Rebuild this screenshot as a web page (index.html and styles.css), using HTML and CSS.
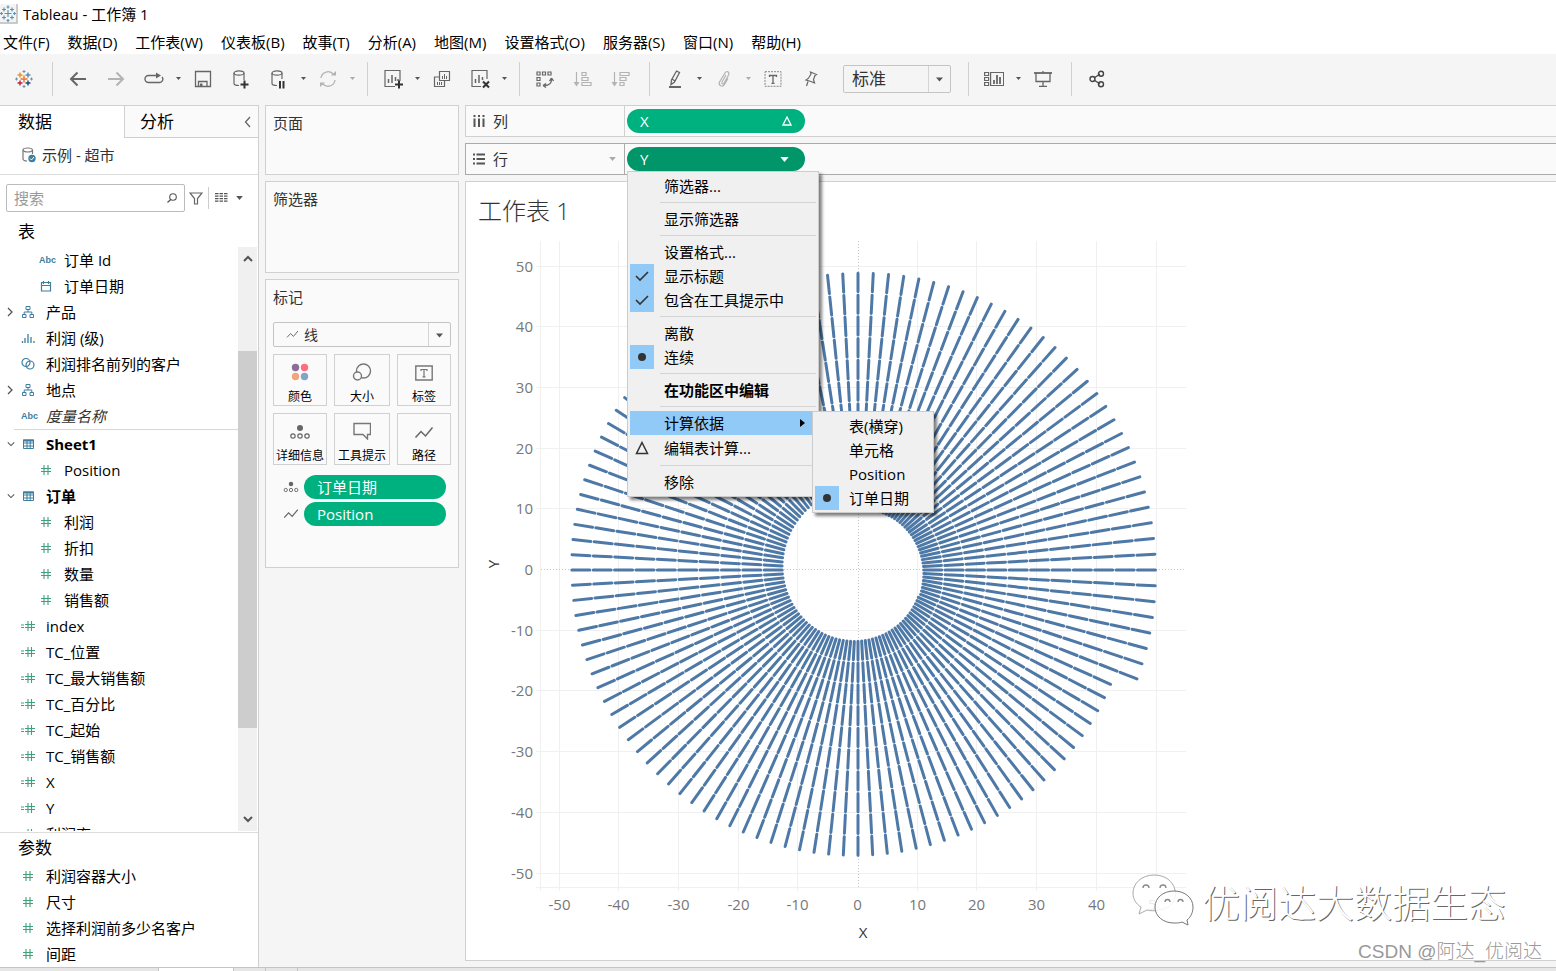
FILE: index.html
```html
<!DOCTYPE html>
<html lang="zh-CN">
<head>
<meta charset="utf-8">
<title>Tableau - 工作簿 1</title>
<link rel="stylesheet" href="styles.css">
</head>
<body>
<svg class="defs" aria-hidden="true">
  <symbol id="hash" viewBox="0 0 14 12"><path d="M5 1v10M9 1v10M2 4.500h10M2 7.500h10" fill="none" stroke="#3fa27a" stroke-width="1.100"/></symbol>
  <symbol id="calc" viewBox="0 0 14 12"><path d="M7 1v10M10.500 1v10M4 4.500h10M4 7.500h10M0 5h3M0 7.500h3" fill="none" stroke="#3fa27a" stroke-width="1.100"/></symbol>
  <symbol id="tbl" viewBox="0 0 14 12"><path d="M2.500 2h10v8.500h-10zM2.500 5h10M2.500 8h10M6 3v7.500M9.200 3v7.500" fill="none" stroke="#3c7f9f"/><path d="M2 1.500h11v2H2z" fill="#3c7f9f"/></symbol>
  <symbol id="tree" viewBox="0 0 14 12"><path d="M5 .5h4v3H5zM1.500 8.500h3.500v3H1.500zM9 8.500h3.500v3H9zM7 3.500V6M3.200 8.500V6h7.600v2.500" fill="none" stroke="#3c7f9f"/></symbol>
  <symbol id="caret" viewBox="0 0 10 6"><path d="M0 0h10L5 6z" fill="currentColor"/></symbol>
  <symbol id="detail" viewBox="0 0 20 16"><circle cx="10" cy="4" r="3" fill="#666"/><g fill="none" stroke="#666" stroke-width="1.200"><circle cx="3" cy="12" r="2.200"/><circle cx="10" cy="12" r="2.200"/><circle cx="17" cy="12" r="2.200"/></g></symbol>
  <symbol id="zig" viewBox="0 0 20 14"><path d="M1.500 11.500 7 5.500l4.500 4.500 7-8.500" fill="none" stroke="#666" stroke-width="1.500"/></symbol>
  <symbol id="right" viewBox="0 0 6 10"><path d="M1 1l4 4-4 4" fill="none" stroke="#555" stroke-width="1.300"/></symbol>
  <symbol id="down" viewBox="0 0 10 6"><path d="M1 1l4 4 4-4" fill="none" stroke="#555" stroke-width="1.300"/></symbol>
</svg>

<header class="titlebar">
  <svg class="app-icon" width="18" height="20" viewBox="0 0 18 20"><path d="M0 0h17v19H0z" fill="#f4f4f4"/><path d="M17 0v19H0" fill="none" stroke="#bbb" stroke-width="1.500"/><path d="M8 6v7M4.500 9.500h7M4 3.500v4M2 5.500h4M12 3.500v4M10 5.500h4M4 11.500v4M2 13.500h4M12 11.500v4M10 13.500h4M8 1.500v3M6.500 3h3M8 15v3M6.500 16.500h3M0 9.500h3M1.500 8v3M13 9.500h3M14.500 8v3" stroke="#5b93b4" stroke-width="1.200"/></svg>
  <h1>Tableau - 工作簿 1</h1>
</header>
<nav class="menubar">
  <a href="#">文件(F)</a><a href="#">数据(D)</a><a href="#">工作表(W)</a><a href="#">仪表板(B)</a><a href="#">故事(T)</a><a href="#">分析(A)</a><a href="#">地图(M)</a><a href="#">设置格式(O)</a><a href="#">服务器(S)</a><a href="#">窗口(N)</a><a href="#">帮助(H)</a>
</nav>

<div class="toolbar" role="toolbar" aria-label="工具栏">
  <button class="tb" aria-label="起始页"><svg width="18" height="18" viewBox="0 0 18 18"><g stroke-width="1.400"><path d="M9 5.500v7M5.500 9h7" stroke="#e8762c"/><path d="M5 2.500v5M2.500 5h5" stroke="#e8912c"/><path d="M13 2.500v5M10.500 5h5" stroke="#5c8fa8"/><path d="M5 10.500v5M2.500 13h5" stroke="#c9203c"/><path d="M13 10.500v5M10.500 13h5" stroke="#1f447e"/><path d="M9 0v3M7.500 1.500h3M9 15v3M7.500 16.500h3M0 9h3M1.500 7.500v3M15 9h3M16.500 7.500v3" stroke="#6a94a8" stroke-width="1"/></g></svg></button>
  <span class="sep"></span>
  <button class="tb" aria-label="撤消"><svg width="18" height="16" viewBox="0 0 18 16"><path d="M17 8H2M8.500 1.500 2 8l6.500 6.500" fill="none" stroke="#666" stroke-width="2"/></svg></button>
  <button class="tb" aria-label="重做"><svg width="18" height="16" viewBox="0 0 18 16"><path d="M1 8h15M9.500 1.500 16 8l-6.500 6.500" fill="none" stroke="#b3b3b3" stroke-width="2"/></svg></button>
  <button class="tb" aria-label="重播"><svg width="20" height="14" viewBox="0 0 20 14"><path d="M13 3.500H4.500a3.300 3.300 0 0 0 0 7h11a3.300 3.300 0 0 0 2.500-5.500" fill="none" stroke="#666" stroke-width="1.400"/><path d="M12 .5v6l5-3z" fill="#666"/></svg></button>
  <button class="cr" aria-label="更多"><svg width="5" height="3"><use href="#caret"/></svg></button>
  <button class="tb" aria-label="保存"><svg width="18" height="18" viewBox="0 0 18 18"><path d="M1.500 1.500h15v15h-15zM4.500 16.500v-5h8.500v5" fill="none" stroke="#666" stroke-width="1.300"/><path d="M6 13.500h2.500v3H6z" fill="#666"/></svg></button>
  <button class="tb" aria-label="新建数据源"><svg width="18" height="20" viewBox="0 0 18 20"><path d="M2 4v10.500c0 1 2 2 5 2M12 4v7" fill="none" stroke="#666" stroke-width="1.200"/><ellipse cx="7" cy="4" rx="5" ry="2.200" fill="none" stroke="#666" stroke-width="1.200"/><path d="M12.500 11.500v8M8.500 15.500h8" stroke="#333" stroke-width="2"/></svg></button>
  <button class="tb" aria-label="暂停更新"><svg width="18" height="20" viewBox="0 0 18 20"><path d="M2 4v10.500c0 1 2 2 5 2M12 4v6" fill="none" stroke="#666" stroke-width="1.200"/><ellipse cx="7" cy="4" rx="5" ry="2.200" fill="none" stroke="#666" stroke-width="1.200"/><path d="M10 12v7.500M13.500 12v7.500" stroke="#333" stroke-width="2"/></svg></button>
  <button class="cr" aria-label="更多"><svg width="5" height="3"><use href="#caret"/></svg></button>
  <button class="tb" aria-label="刷新"><svg width="18" height="18" viewBox="0 0 18 18"><path d="M2 8a7 7 0 0 1 12.500-3.500M16 10A7 7 0 0 1 3.500 13.500" fill="none" stroke="#b3b3b3" stroke-width="1.300"/><path d="M12 5.500h5V1zM6 12.500H1V17z" fill="#b3b3b3"/></svg></button>
  <button class="cr off" aria-label="更多"><svg width="5" height="3"><use href="#caret"/></svg></button>
  <span class="sep"></span>
  <button class="tb" aria-label="新建工作表"><svg width="20" height="20" viewBox="0 0 20 20"><path d="M12 17.500H2v-16h15V12" fill="none" stroke="#666" stroke-width="1.200"/><path d="M5.500 14v-4M9 14V6M12.500 12V8M15 12V10" stroke="#666" stroke-width="1.500"/><path d="M16 11.500v8M12 15.500h8" stroke="#333" stroke-width="2"/></svg></button>
  <button class="cr" aria-label="更多"><svg width="5" height="3"><use href="#caret"/></svg></button>
  <button class="tb" aria-label="复制"><svg width="18" height="18" viewBox="0 0 18 18"><path d="M6.500 1.500h10v9h-10zM6.500 7h-5v9.500h10v-6" fill="none" stroke="#666" stroke-width="1.200"/><path d="M9.500 9V6M11.500 9V4M13.500 9V6M4.500 15v-3M6.500 15v-3M8.500 15v-3" stroke="#666"/></svg></button>
  <button class="tb" aria-label="清除"><svg width="20" height="20" viewBox="0 0 20 20"><path d="M11 17.500H2v-16h15V10" fill="none" stroke="#666" stroke-width="1.200"/><path d="M5.500 14v-4M9 14V6M12.500 11V8" stroke="#666" stroke-width="1.500"/><path d="M13 12.500l6 6M19 12.500l-6 6" stroke="#333" stroke-width="2"/></svg></button>
  <button class="cr" aria-label="更多"><svg width="5" height="3"><use href="#caret"/></svg></button>
  <span class="sep"></span>
  <button class="tb" aria-label="交换行和列"><svg width="18" height="18" viewBox="0 0 18 18"><path d="M1 2h3v3H1zM6.500 2h3v3h-3zM12 2h3v3h-3zM1 7.500h3v3H1zM1 13h3v3H1z" fill="none" stroke="#666" stroke-width="1.200"/><path d="M15.500 9.500c0 4-3 6-7 6M15.500 8l-2 3M15.500 8l2 3M7 15.500l3-2M7 15.500l3 2" fill="none" stroke="#666" stroke-width="1.300"/></svg></button>
  <button class="tb" aria-label="升序"><svg width="20" height="16" viewBox="0 0 20 16"><path d="M3.500 1v13M9 1.500h4v3H9zM9 6.500h6v3H9zM9 11.500h9v3H9z" fill="none" stroke="#b3b3b3" stroke-width="1.200"/><path d="M.5 11h6l-3 4.500z" fill="#b3b3b3"/></svg></button>
  <button class="tb" aria-label="降序"><svg width="20" height="16" viewBox="0 0 20 16"><path d="M3.500 1v13M9 1.500h9v3H9zM9 6.500h6v3H9zM9 11.500h4v3H9z" fill="none" stroke="#b3b3b3" stroke-width="1.200"/><path d="M.5 11h6l-3 4.500z" fill="#b3b3b3"/></svg></button>
  <span class="sep"></span>
  <button class="tb" aria-label="突出显示"><svg width="14" height="18" viewBox="0 0 14 18"><path d="M8.500 1l3 1.500-5 9.500-3.500 2.500.5-4.500zM4 9l3 2" fill="none" stroke="#666" stroke-width="1.300"/><path d="M1 17h12" stroke="#666" stroke-width="2"/></svg></button>
  <button class="cr" aria-label="更多"><svg width="5" height="3"><use href="#caret"/></svg></button>
  <button class="tb" aria-label="组"><svg width="14" height="18" viewBox="0 0 14 18"><path d="M9 5l-4 7c-.8 1.800 1.200 2.600 2 1.200l4.500-8C13 2 9.500.2 8 3L2.500 12c-1.500 3.500 3 5.500 4.800 2.600L11 8.500" fill="none" stroke="#b3b3b3" stroke-width="1.200"/></svg></button>
  <button class="cr off" aria-label="更多"><svg width="5" height="3"><use href="#caret"/></svg></button>
  <button class="tb" aria-label="显示标签"><svg width="18" height="16" viewBox="0 0 18 16"><path d="M1 .7h16v14.600H1z" fill="none" stroke="#888" stroke-dasharray="2 1"/><path d="M5.500 6V4.500h7V6M9 4.500v8M7.500 12.300h3" fill="none" stroke="#666" stroke-width="1.300"/></svg></button>
  <button class="tb" aria-label="固定"><svg width="14" height="16" viewBox="0 0 14 16"><path d="M6.500 1l6 2.500-1.500 1-1.500 4 1 3.500-3.500-1.500L2 9l2.500-1.800L7 3zM4 10.500 2.500 15" fill="none" stroke="#666" stroke-width="1.200"/></svg></button>
  <span class="fit"><select aria-label="适合"><option>标准</option></select><svg width="7" height="5"><use href="#caret"/></svg></span>
  <span class="sep"></span>
  <button class="tb" aria-label="显示卡"><svg width="20" height="16" viewBox="0 0 20 16"><path d="M.6 1.500h4v3h-4zM.6 6.500h4v3h-4zM.6 11.500h4v3h-4zM6.600 1.500h13v13h-13z" fill="none" stroke="#666" stroke-width="1.200"/><path d="M10 13V9M13 13V4M16 13V6" stroke="#666" stroke-width="1.800"/></svg></button>
  <button class="cr" aria-label="更多"><svg width="5" height="3"><use href="#caret"/></svg></button>
  <button class="tb" aria-label="演示模式"><svg width="18" height="16" viewBox="0 0 18 16"><path d="M2 2v8.500h14V2M9 10.500v4.500M5 15.300h8M9 0v2" fill="none" stroke="#666" stroke-width="1.300"/><path d="M0 2h18" stroke="#666" stroke-width="1.800"/></svg></button>
  <span class="sep"></span>
  <button class="tb" aria-label="共享"><svg width="16" height="18" viewBox="0 0 16 18"><path d="M5 8l6-4M5 10l6 4" stroke="#444" stroke-width="1.300"/><g fill="none" stroke="#444" stroke-width="1.400"><circle cx="3.500" cy="9" r="2.500"/><circle cx="12" cy="3.700" r="2.500"/><circle cx="12" cy="14.300" r="2.500"/></g></svg></button>
</div>

<main class="workspace">
  <aside class="data-pane">
    <div class="tabs">
      <button class="tab active">数据</button>
      <button class="tab">分析<svg width="7" height="12" viewBox="0 0 7 12"><path d="M6 1 1.500 6 6 11" fill="none" stroke="#666" stroke-width="1.300"/></svg></button>
    </div>
    <div class="source"><svg width="14" height="16" viewBox="0 0 14 16"><path d="M1 3v9c0 1 2 2 4 2M10.500 3v4" fill="none" stroke="#777" stroke-width="1.200"/><ellipse cx="5.700" cy="3" rx="4.700" ry="2" fill="none" stroke="#777" stroke-width="1.200"/><circle cx="10" cy="11.500" r="3.700" fill="#3c7f9f"/><path d="M8 11.500l1.500 1.500 2.500-3" fill="none" stroke="#fff"/></svg>示例 - 超市</div>
    <div class="search-row">
      <label class="search"><input type="text" placeholder="搜索" aria-label="搜索"><svg width="10" height="10" viewBox="0 0 10 10"><circle cx="6" cy="4" r="3.300" fill="none" stroke="#555" stroke-width="1.100"/><path d="M3.700 6.500.5 9.500" stroke="#555" stroke-width="1.200"/></svg></label>
      <button class="plain" aria-label="筛选"><svg width="14" height="13" viewBox="0 0 14 13"><path d="M1 1h12L8.500 6.500V12h-3V6.500z" fill="none" stroke="#666" stroke-width="1.200"/></svg></button>
      <span class="vline"></span>
      <button class="plain view" aria-label="视图"><svg width="13" height="10" viewBox="0 0 13 10"><path d="M0 .7h13M0 3.200h13M0 5.700h13M0 8.200h13" stroke="#555" stroke-width="1.200" stroke-dasharray="3.500 1"/></svg><svg width="7" height="4"><use href="#caret"/></svg></button>
    </div>
    <h2>表</h2>
    <div class="tree">
      <ul class="fields">
        <li class="sub"><i class="abc">Abc</i>订单 Id</li>
        <li class="sub"><svg class="ic" viewBox="0 0 14 12"><path d="M2.500 2.500h9v8.500h-9zM2.500 5.500h9M4.500 1v3M9.500 1v3" fill="none" stroke="#3c7f9f" stroke-width="1.200"/></svg>订单日期</li>
        <li><svg class="arrow" width="6" height="10"><use href="#right"/></svg><svg class="ic"><use href="#tree"/></svg>产品</li>
        <li><svg class="ic" viewBox="0 0 14 12"><path d="M1.500 9v2M4 6v5M7 2v9M10 5v6M13 9v2" stroke="#3c7f9f" stroke-width="1.300"/></svg>利润 (级)</li>
        <li><svg class="ic" viewBox="0 0 14 12"><g fill="none" stroke="#3c7f9f" stroke-width="1.200"><circle cx="5" cy="4.500" r="4"/><circle cx="9" cy="7" r="4"/></g></svg>利润排名前列的客户</li>
        <li><svg class="arrow" width="6" height="10"><use href="#right"/></svg><svg class="ic"><use href="#tree"/></svg>地点</li>
        <li class="last"><i class="abc">Abc</i><em>度量名称</em></li>
        <li class="group"><svg class="arrow" width="8" height="6"><use href="#down"/></svg><svg class="ic"><use href="#tbl"/></svg>Sheet1</li>
        <li class="sub"><svg class="ic"><use href="#hash"/></svg>Position</li>
        <li class="group"><svg class="arrow" width="8" height="6"><use href="#down"/></svg><svg class="ic"><use href="#tbl"/></svg>订单</li>
        <li class="sub"><svg class="ic"><use href="#hash"/></svg>利润</li>
        <li class="sub"><svg class="ic"><use href="#hash"/></svg>折扣</li>
        <li class="sub"><svg class="ic"><use href="#hash"/></svg>数量</li>
        <li class="sub"><svg class="ic"><use href="#hash"/></svg>销售额</li>
        <li><svg class="ic"><use href="#calc"/></svg>index</li>
        <li><svg class="ic"><use href="#calc"/></svg>TC_位置</li>
        <li><svg class="ic"><use href="#calc"/></svg>TC_最大销售额</li>
        <li><svg class="ic"><use href="#calc"/></svg>TC_百分比</li>
        <li><svg class="ic"><use href="#calc"/></svg>TC_起始</li>
        <li><svg class="ic"><use href="#calc"/></svg>TC_销售额</li>
        <li><svg class="ic"><use href="#calc"/></svg>X</li>
        <li><svg class="ic"><use href="#calc"/></svg>Y</li>
        <li><svg class="ic"><use href="#calc"/></svg>利润率</li>
      </ul>
      <div class="scroll">
        <svg width="10" height="7" viewBox="0 0 10 7"><path d="M1 6l4-4 4 4" fill="none" stroke="#555" stroke-width="2"/></svg>
        <span class="track"><span class="thumb"></span></span>
        <svg width="10" height="7" viewBox="0 0 10 7"><path d="M1 1l4 4 4-4" fill="none" stroke="#555" stroke-width="2"/></svg>
      </div>
    </div>
    <section class="params">
      <h2>参数</h2>
      <ul class="fields">
        <li><svg class="ic"><use href="#hash"/></svg>利润容器大小</li>
        <li><svg class="ic"><use href="#hash"/></svg>尺寸</li>
        <li><svg class="ic"><use href="#hash"/></svg>选择利润前多少名客户</li>
        <li><svg class="ic"><use href="#hash"/></svg>间距</li>
      </ul>
    </section>
  </aside>

  <div class="cards">
    <section class="card pages"><h3>页面</h3></section>
    <section class="card filters"><h3>筛选器</h3></section>
    <section class="card marks">
      <h3>标记</h3>
      <div class="mark-type"><svg class="line" width="13" height="9"><use href="#zig"/></svg><select aria-label="标记类型"><option>线</option></select><svg class="tri" width="7" height="5"><use href="#caret"/></svg></div>
      <div class="mark-grid">
        <button><svg width="18" height="18" viewBox="0 0 18 18"><circle cx="4.500" cy="4.500" r="3.700" fill="#8a6d9b"/><circle cx="13.500" cy="4.500" r="3.700" fill="#fb6f7f"/><circle cx="4.500" cy="13.500" r="3.700" fill="#f0a67b"/><circle cx="13.500" cy="13.500" r="3.700" fill="#80a5cb"/></svg>颜色</button>
        <button><svg width="20" height="18" viewBox="0 0 20 18"><g fill="#fafafa" stroke="#777" stroke-width="1.400"><circle cx="11.500" cy="8" r="7"/><circle cx="5.500" cy="13" r="4"/></g></svg>大小</button>
        <button><svg width="18" height="16" viewBox="0 0 18 16"><path d="M.8 1h16.400v14H.8z" fill="none" stroke="#777" stroke-width="1.400"/><path d="M6 6V4.500h6V6M9 4.500V12M7.500 11.800h3" fill="none" stroke="#777" stroke-width="1.200"/></svg>标签</button>
        <button><svg width="20" height="16"><use href="#detail"/></svg>详细信息</button>
        <button><svg width="18" height="18" viewBox="0 0 18 18"><path d="M1 1.500h16.500v11h-3V17L10 12.500H1z" fill="none" stroke="#777" stroke-width="1.400"/></svg>工具提示</button>
        <button><svg width="20" height="14"><use href="#zig"/></svg>路径</button>
      </div>
      <div class="mark-pill"><svg width="16" height="12"><use href="#detail"/></svg><button class="pill">订单日期</button></div>
      <div class="mark-pill"><svg width="16" height="12"><use href="#zig"/></svg><button class="pill">Position</button></div>
    </section>
  </div>

  <div class="view-area">
    <div class="shelf">
      <div class="shelf-name"><svg width="12" height="12" viewBox="0 0 12 12"><path d="M1.500 0v2M6 0v2M10.500 0v2M1.500 3.500V12M6 3.500V12M10.500 3.500V12" stroke="#555" stroke-width="2"/></svg>列</div>
      <div class="shelf-body"><button class="pill">X<svg width="10" height="10" viewBox="0 0 10 10"><path d="M5 1l4 8H1z" fill="none" stroke="#fff" stroke-width="1.300"/></svg></button></div>
    </div>
    <div class="shelf active">
      <div class="shelf-name"><svg width="12" height="12" viewBox="0 0 12 12"><path d="M0 1.500h2M0 6h2M0 10.500h2M3.500 1.500H12M3.500 6H12M3.500 10.500H12" stroke="#555" stroke-width="2"/></svg>行<svg class="tri" width="7" height="4"><use href="#caret"/></svg></div>
      <div class="shelf-body">
        <button class="pill dark">Y<svg class="y-tri" width="9" height="5"><use href="#caret"/></svg></button>
        <div class="menu" role="menu">
          <button role="menuitem">筛选器...</button>
          <hr>
          <button role="menuitem">显示筛选器</button>
          <hr>
          <button role="menuitem">设置格式...</button>
          <button role="menuitem"><span class="mk"><svg width="14" height="12" viewBox="0 0 14 12"><path d="M1 6l4 4 8-8" fill="none" stroke="#333" stroke-width="1.600"/></svg></span>显示标题</button>
          <button role="menuitem"><span class="mk"><svg width="14" height="12" viewBox="0 0 14 12"><path d="M1 6l4 4 8-8" fill="none" stroke="#333" stroke-width="1.600"/></svg></span>包含在工具提示中</button>
          <hr>
          <button role="menuitem">离散</button>
          <button role="menuitem"><span class="mk"><span class="dot"></span></span>连续</button>
          <hr>
          <button role="menuitem" class="bold">在功能区中编辑</button>
          <hr>
          <button role="menuitem" class="hot">计算依据<svg class="more" width="5" height="8" viewBox="0 0 5 8"><path d="M0 0v8l5-4z"/></svg></button>
          <button role="menuitem" class="tall"><span class="mk none"><svg width="14" height="14" viewBox="0 0 14 14"><path d="M7 1.500l5.500 11h-11z" fill="none" stroke="#333" stroke-width="1.500"/></svg></span>编辑表计算...</button>
          <hr>
          <button role="menuitem">移除</button>
          <div class="menu submenu" role="menu">
            <button role="menuitem">表(横穿)</button>
            <button role="menuitem">单元格</button>
            <button role="menuitem">Position</button>
            <button role="menuitem"><span class="mk"><span class="dot"></span></span>订单日期</button>
          </div>
        </div>
      </div>
    </div>
    <section class="sheet">
      <h2 class="sheet-title">工作表 1</h2>
      <svg class="chart" id="chart" width="740" height="710" viewBox="0 0 740 710" role="img" aria-label="X / Y"></svg>
      <div class="brand">
        <svg width="62" height="54" viewBox="0 0 62 54"><g fill="#fff" fill-opacity=".85" stroke="#777" stroke-width="1"><path d="M22 1C10 1 1 9 1 19c0 6 3 11 8 14l-2 7 8-4c3 1 8 1 12 0 14-2 18-12 16-20C41 7 33 1 22 1z" stroke="#aaa"/><path d="M42 17c-11 0-19 7-19 16s8 16 19 16c3 0 6 0 8-1l6 3-1-5c4-3 6-8 6-13 0-9-8-16-19-16z"/></g><g fill="none" stroke="#888" stroke-width="1.300"><path d="M11 14a3 3 0 0 1 6 0M28 14a3 3 0 0 1 6 0M33 28a2.500 2.500 0 0 1 5 0M46 28a2.500 2.500 0 0 1 5 0"/></g></svg>
        <span>优阅达大数据生态</span>
      </div>
      <div class="credit">CSDN @阿达_优阅达</div>
    </section>
  </div>
</main>
<footer class="sheet-tabs"><span class="st"></span><span class="st on"></span><span class="st sm"></span><span class="st sm"></span></footer>
<script src="chart.js"></script>
</body>
</html>
```
FILE: styles.css
```css
* { box-sizing: border-box; }
body {
  margin: 0;
  height: 100vh;
  display: flex;
  flex-direction: column;
  overflow: hidden;
  background: #f5f5f5;
  color: #000;
  font: 15px/24px "Open Sans", "Noto Sans CJK SC", sans-serif;
}
button, select, input { font: inherit; color: inherit; margin: 0; padding: 0; border: 0; background: none; }
select { appearance: none; }
ul { list-style: none; margin: 0; padding: 0; }
h1, h2, h3 { margin: 0; font-weight: 400; }
svg { flex: none; display: block; }
.defs { position: absolute; width: 0; height: 0; }

.titlebar { display: flex; align-items: center; gap: 5px; height: 30px; padding-bottom: 2px; background: #fff; }
.titlebar h1 { font-size: 15px; }
.menubar { display: flex; gap: 18px; height: 24px; padding-left: 3px; background: #fff; }
.menubar a { color: inherit; text-decoration: none; white-space: nowrap; }

.toolbar { display: flex; align-items: center; gap: 6px; height: 51px; padding: 0 0 2px 8px; color: #555; }
.tb { width: 32px; height: 32px; display: flex; align-items: center; justify-content: center; }
.cr { width: 5px; height: 24px; display: flex; align-items: center; justify-content: center; }
.off { color: #aaa; }
.sep { width: 1px; height: 34px; margin: 0 3px 0 6px; background: #d0d0d0; }
.fit { position: relative; width: 108px; height: 28px; margin-left: 10px; border: 1px solid #c4c4c4; border-radius: 2px; }
.fit select { width: 100%; height: 100%; padding-left: 8px; font-size: 17px; color: #333; }
.fit svg { position: absolute; right: 7px; top: 11px; }
.fit::after { content: ""; position: absolute; right: 21px; top: 0; bottom: 0; border-left: 1px solid #d4d4d4; }
.fit + .sep { margin-left: 11px; }

.workspace { flex: 1; min-height: 0; display: flex; }
.data-pane { width: 259px; display: flex; flex-direction: column; background: #fff; border: 1px solid #d0d0d0; border-width: 1px 1px 0 0; }
.tabs { display: flex; height: 32px; }
.tab { display: flex; align-items: center; width: 124px; padding-left: 18px; font-size: 17px; }
.tab:not(.active) { flex: 1; justify-content: space-between; padding: 0 7px 0 15px; background: #fafafa; border: 1px solid #d0d0d0; border-width: 0 0 1px 1px; }
.source { display: flex; align-items: center; gap: 6px; height: 37px; padding: 0 0 2px 22px; border-bottom: 1px solid #ddd; color: #333; }
.search-row { display: flex; align-items: center; gap: 4px; padding: 9px 0 0 6px; }
.search { display: flex; align-items: center; width: 179px; height: 28px; padding: 0 7px; border: 1px solid #bbb; border-radius: 2px; }
.search input { flex: 1; min-width: 0; outline: 0; }
.search input::placeholder { color: #999; }
.plain { display: flex; align-items: center; color: #555; }
.vline { width: 1px; height: 22px; margin: 0 2px 0 1px; background: #ccc; }
.view { gap: 8px; }
.data-pane h2 { padding-left: 18px; font-size: 17px; }
.search-row + h2 { margin: 8px 0 3px; }
.tree { flex: 1; min-height: 0; display: flex; }
.fields { flex: 1; overflow: hidden; }
.fields li { display: flex; align-items: center; gap: 11px; height: 26px; padding-left: 21px; white-space: nowrap; position: relative; }
.fields .sub { padding-left: 39px; }
.fields .group { font-weight: 700; }
.fields .last { margin-bottom: 1px; height: 27px; padding-bottom: 1px; }
.fields .last::after { content: ""; position: absolute; left: 14px; right: 0; bottom: 0; border-top: 1px solid #d8d8d8; }
.ic { width: 14px; height: 12px; }
.abc { width: 14px; font: 700 9px/12px "Liberation Sans", sans-serif; color: #3c7f9f; }
.fields em { color: #333; }
.arrow { position: absolute; left: 7px; }
.scroll { width: 19px; margin-right: 1px; padding: 8px 0; display: flex; flex-direction: column; align-items: center; background: #f0f0f0; }
.track { flex: 1; width: 100%; padding-top: 89px; }
.thumb { display: block; height: 81%; background: #cdcdcd; }
.params { margin-top: 1px; border-top: 1px solid #ddd; }
.params h2 { line-height: 30px; }

.cards { width: 206px; padding: 0 6px; display: flex; flex-direction: column; gap: 6px; }
.card { padding: 5px 7px; background: #fafafa; border: 1px solid #d0d0d0; }
.card h3 { font-size: 15px; color: #333; }
.pages { height: 70px; }
.filters { height: 92px; }
.marks { height: 289px; }
.mark-type { position: relative; height: 25px; margin: 13px 0 7px; border: 1px solid #c4c4c4; border-radius: 2px; color: #555; }
.mark-type select { display: block; width: 100%; height: 23px; padding-left: 30px; font-size: 14px; color: #333; }
.mark-type .line { position: absolute; left: 12px; top: 7px; }
.mark-type .tri { position: absolute; right: 7px; top: 10px; }
.mark-type::after { content: ""; position: absolute; right: 21px; top: 0; bottom: 0; border-left: 1px solid #d4d4d4; }
.mark-grid { display: grid; grid-template-columns: 54fr 56fr 54fr; gap: 7px; margin-bottom: 10px; }
.mark-grid button { display: flex; flex-direction: column; align-items: center; justify-content: flex-end; height: 52px; font-size: 12px; line-height: 16px; white-space: nowrap; border: 1px solid #d0d0d0; }
.mark-grid svg { margin: auto 0 8px; }
.mark-pill { display: flex; align-items: center; gap: 5px; padding: 0 5px 0 10px; margin-bottom: 3px; }
.mark-pill .pill { flex: 1; }
.pill { display: flex; align-items: center; justify-content: space-between; height: 24px; padding: 0 13px; border-radius: 12px; background: #00b180; color: #fff; }
.pill.dark { background: #00966a; }

.view-area { flex: 1; min-width: 0; display: flex; flex-direction: column; gap: 6px; padding-bottom: 6px; }
.shelf { display: flex; height: 32px; background: #fafafa; border: 1px solid #d0d0d0; border-right: 0; }
.shelf.active { border-color: #aaa; }
.shelf-name { display: flex; align-items: center; gap: 8px; width: 159px; padding: 0 8px 0 7px; border-right: 1px solid #d0d0d0; color: #333; }
.active .shelf-name { border-color: #aaa; }
.shelf-name .tri { margin-left: auto; color: #aaa; }
.shelf-body { position: relative; padding: 3px 2px; }
.shelf-body > .pill { width: 178px; }
.y-tri { margin-right: 3px; }
.sheet { position: relative; flex: 1; min-height: 0; background: #fff; border: 1px solid #d0d0d0; border-right: 0; }
.sheet-title { padding: 9px 0 0 12px; height: 53px; font: 300 24px/40px "Open Sans", "Noto Sans CJK SC", sans-serif; color: #333; }
.chart { font-size: 15px; fill: #666; }
.chart .title { fill: #333; }
.chart .tick { fill: #777; }

.menu { position: absolute; z-index: 5; left: 2px; top: 27px; width: 192px; padding: 2px; background: #f0f0f0; border: 1px solid #ccc; box-shadow: 3px 3px 3px rgba(0, 0, 0, .5); }
.menu button { display: flex; align-items: center; position: relative; width: 100%; height: 24px; padding-left: 34px; white-space: nowrap; }
.menu hr { height: 1px; margin: 4px 0 4px 30px; border: 0; background: #d4d4d4; }
.menu .bold { font-weight: 700; }
.menu .tall { height: 26px; }
.menu .hot { background: #91c9f7; }
.more { position: absolute; right: 11px; }
.mk { position: absolute; left: 0; top: 0; bottom: 0; width: 24px; display: grid; place-items: center; background: #91c9f7; }
.mk.none { background: none; }
.dot { width: 8px; height: 8px; border-radius: 50%; background: #333; }
.submenu { left: 184px; top: 239px; width: 122px; }

.brand { position: absolute; right: 50px; bottom: 32px; display: flex; align-items: center; gap: 8px; font: 300 38px/48px "Noto Sans CJK SC", sans-serif; color: #fff; text-shadow: 1px 1px 0 #666; }
.credit { position: absolute; right: 14px; bottom: -4px; font: 19px/24px "Liberation Sans", "Noto Sans CJK SC", sans-serif; font-weight: 300; color: #999; }

.sheet-tabs { display: flex; height: 4px; border-top: 1px solid #c4c4c4; background: #e6e6e6; }
.st { width: 159px; border-right: 1px solid #c4c4c4; }
.st.on { width: 75px; background: #fff; }
.st.sm { width: 32px; }
```
FILE: chart.js
```javascript
const NS = "http://www.w3.org/2000/svg";
const chart = document.getElementById("chart");
const cx = 392, cy = 335, sx = 5.97, sy = 6.07;

function add(name, attrs, text) {
  const el = document.createElementNS(NS, name);
  for (const key in attrs) el.setAttribute(key, attrs[key]);
  if (text !== undefined) el.textContent = text;
  chart.appendChild(el);
}
function path(d, stroke, extra) {
  add("path", Object.assign({ d, stroke, fill: "none" }, extra));
}

// grid and tick labels
for (let v = -50; v <= 50; v += 10) {
  const x = Math.round(cx + v * sx) - 0.5;
  const y = Math.round(cy - v * sy) - 0.5;
  if (v !== 0) {
    path(`M${x} 6V656`, "#f0f0f0");
    path(`M70 ${y}H720`, "#f0f0f0");
  }
  add("text", { x: 67, y: y + 5, "text-anchor": "end", class: "tick" }, v);
  add("text", { x: x, y: 675, "text-anchor": "middle", class: "tick" }, v);
}
path("M74.500 6V656M70 652.500H720", "#f0f0f0");
path(`M${cx + 0.5} 6V652M75 ${cy - 0.5}H720`, "#c8c8c8", { "stroke-dasharray": "1 2" });
add("text", { x: 397, y: 703, "text-anchor": "middle", class: "title" }, "X");
add("text", { transform: "translate(33 329) rotate(-90)", "text-anchor": "middle", class: "title" }, "Y");

// spiral of radial marks: 120 spokes clockwise, radius grows along the turn
let d = "";
for (let s = 0; s < 120; s++) {
  const a = (-24 - s * 3) * Math.PI / 180;
  const outer = 46.3 + 0.0315 * s;
  const count = s < 82 ? 10 : 11;
  for (let k = 0; k < count; k++) {
    const r1 = outer - k * 3.58, r0 = r1 - 3.02;
    d += `M${(cx + r0 * sx * Math.cos(a)).toFixed(2)} ${(cy - r0 * sy * Math.sin(a)).toFixed(2)}`
       + `L${(cx + r1 * sx * Math.cos(a)).toFixed(2)} ${(cy - r1 * sy * Math.sin(a)).toFixed(2)}`;
  }
}
path(d, "#4e79a7", { "stroke-width": 3, "stroke-linecap": "round" });
```
